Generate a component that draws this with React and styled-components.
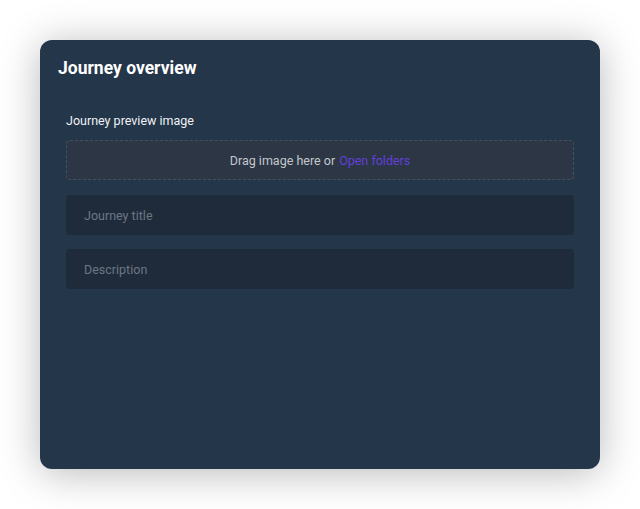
import React from "react";
import styled, { createGlobalStyle } from "styled-components";

const Global = createGlobalStyle`
  html, body { margin: 0; padding: 0; background: #ffffff; }
  body { font-family: Roboto, "Liberation Sans", sans-serif; }
  * { box-sizing: border-box; }
`;

const Page = styled.div`
  width: 640px;
  height: 509px;
  padding: 40px;
`;

const Card = styled.section`
  width: 560px;
  height: 429px;
  background: #243649;
  border-radius: 12px;
  box-shadow: 0 4px 40px rgba(0, 0, 0, 0.28);
  padding: 18px 26px 0 18px;
  display: flex;
  flex-direction: column;
`;

const Title = styled.h1`
  margin: 0;
  font-size: 17.5px;
  font-weight: 700;
  color: #ffffff;
  line-height: 21px;
`;

const Body = styled.div`
  padding: 34px 0 0 8px;
  display: flex;
  flex-direction: column;
`;

const Label = styled.div`
  font-size: 12.5px;
  color: #eef1f5;
  line-height: 16px;
  margin-bottom: 11px;
`;

const Drop = styled.div`
  height: 40px;
  border: 1px dashed #465160;
  border-radius: 4px;
  background: #2c3644;
  display: flex;
  align-items: center;
  justify-content: center;
  font-size: 12.5px;
  color: #c3c7cd;
  margin-bottom: 15px;
`;

const Link = styled.span`
  color: #6240d8;
  margin-left: 4px;
`;

const Field = styled.div`
  height: 40px;
  border-radius: 4px;
  background: #1f2b3b;
  display: flex;
  align-items: center;
  padding-left: 18px;
  font-size: 12.5px;
  color: #6c7683;
  margin-bottom: ${(p) => (p.$last ? 0 : 14)}px;
`;

export default function App() {
  return (
    <>
      <Global />
      <Page>
        <Card>
          <Title>Journey overview</Title>
          <Body>
            <Label>Journey preview image</Label>
            <Drop>
              Drag image here or<Link>Open folders</Link>
            </Drop>
            <Field>Journey title</Field>
            <Field $last>Description</Field>
          </Body>
        </Card>
      </Page>
    </>
  );
}
